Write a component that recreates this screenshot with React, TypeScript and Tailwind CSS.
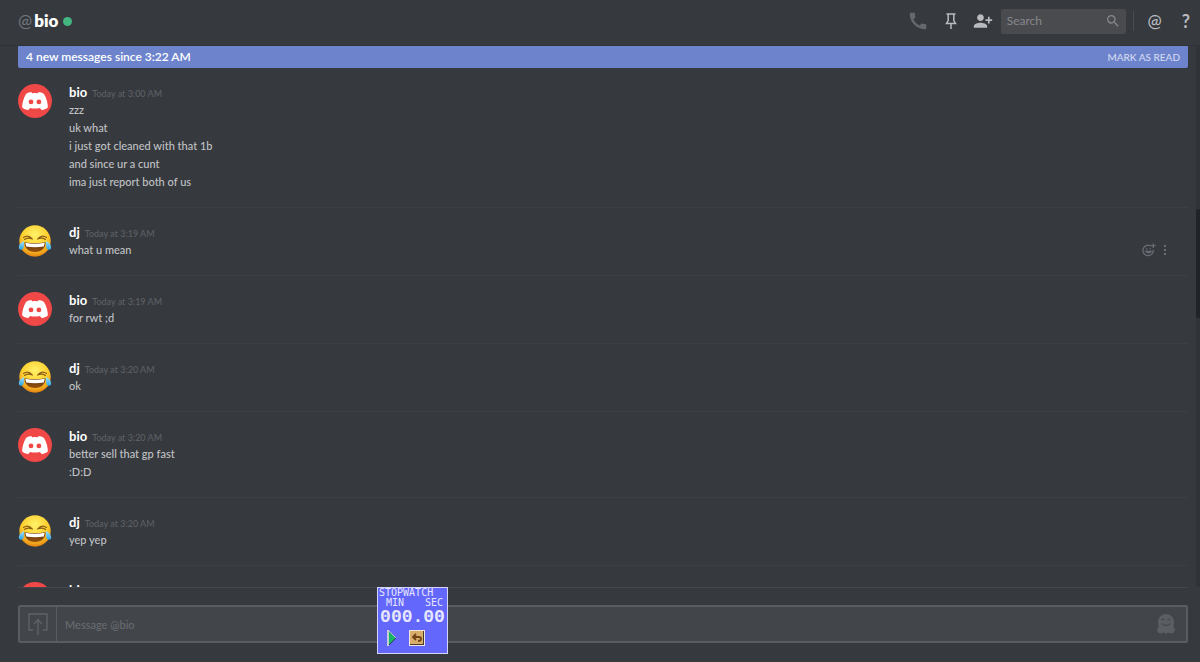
import { useId } from "react";
import { MdCall, MdPersonAdd, MdSearch } from "react-icons/md";

type Author = "bio" | "dj";

type MessageGroup = {
  author: Author;
  time: string;
  lines: string[];
  hovered?: boolean;
};

const MESSAGES: MessageGroup[] = [
  {
    author: "bio",
    time: "Today at 3:00 AM",
    lines: [
      "zzz",
      "uk what",
      "i just got cleaned with that 1b",
      "and since ur a cunt",
      "ima just report both of us",
    ],
  },
  { author: "dj", time: "Today at 3:19 AM", lines: ["what u mean"], hovered: true },
  { author: "bio", time: "Today at 3:19 AM", lines: ["for rwt ;d"] },
  { author: "dj", time: "Today at 3:20 AM", lines: ["ok"] },
  { author: "bio", time: "Today at 3:20 AM", lines: ["better sell that gp fast", ":D:D"] },
  { author: "dj", time: "Today at 3:20 AM", lines: ["yep yep"] },
  { author: "bio", time: "Today at 3:20 AM", lines: [] },
];

function DiscordAvatar() {
  return (
    <svg viewBox="0 0 34 34" className="size-full">
      <circle cx="17" cy="17" r="17" fill="#f04747" />
      <path
        d="M8 10C10 8.600 11.800 8.100 13.400 8l.7 1.200q2.900-.5 5.800 0l.7-1.200c1.600.1 3.400.6 5.400 2 2.300 3.900 3.700 8.200 3.900 13.300-1.700 1.700-3.900 2.600-6.400 2.700l-1.500-2q-5 1.200-10 0l-1.500 2c-2.500-.1-4.700-1-6.400-2.700.2-5.100 1.600-9.400 3.900-13.300z"
        fill="#fff"
      />
      <circle cx="13" cy="17.900" r="2.400" fill="#f04747" />
      <circle cx="20.900" cy="17.900" r="2.400" fill="#f04747" />
    </svg>
  );
}

function JoyAvatar() {
  const id = useId();
  return (
    <svg viewBox="0 0 34 34" className="size-full">
      <defs>
        <radialGradient id={`${id}face`} cx="0.5" cy="0.3" r="0.72">
          <stop offset="0" stopColor="#fff36b" />
          <stop offset="0.55" stopColor="#fdd02f" />
          <stop offset="0.85" stopColor="#f0a01c" />
          <stop offset="1" stopColor="#d9780c" />
        </radialGradient>
        <linearGradient id={`${id}mouth`} x1="0" y1="0" x2="0" y2="1">
          <stop offset="0" stopColor="#5a2f0a" />
          <stop offset="1" stopColor="#96520f" />
        </linearGradient>
        <linearGradient id={`${id}tear`} x1="0" y1="0" x2="0" y2="1">
          <stop offset="0" stopColor="#a5e2fa" />
          <stop offset="1" stopColor="#2fa3e0" />
        </linearGradient>
      </defs>
      <circle cx="17" cy="17" r="15.700" fill={`url(#${id}face)`} />
      <path
        d="M5.500 13.500q4.500-3.500 9 1.500q-4.500-2-8 .5M28.500 13.500q-4.500-3.500-9 1.500q4.500-2 8 .5"
        fill="none"
        stroke="#8a5a14"
        strokeWidth="1.100"
        strokeLinecap="round"
        strokeLinejoin="round"
      />
      <path d="M6.500 18.300q10.500 2 21 0c.2 5.700-4 9.700-10.500 9.700s-10.700-4-10.500-9.700z" fill={`url(#${id}mouth)`} />
      <path d="M7.200 18.800q9.800 1.900 19.600 0l-1 3.700q-8.800 1.500-17.600 0z" fill="#fff" />
      <path
        d="M6.200 17c-2.700.8-5.400 3.700-5.400 6.500 0 3.100 4.500 3 5-.6zM27.800 17c2.700.8 5.400 3.700 5.400 6.500 0 3.100-4.500 3-5-.6z"
        fill={`url(#${id}tear)`}
      />
    </svg>
  );
}

function PinIcon() {
  return (
    <svg viewBox="0 0 12 16" className="h-4 w-3" fill="none" stroke="#b9bbbe" strokeWidth="1.500">
      <path d="M1.500 1h9M3.200 1v6.500L1.500 10.500h9L8.800 7.500V1M6 10.500V16" />
    </svg>
  );
}

function ReactionIcon() {
  return (
    <svg viewBox="0 0 14 14" className="size-[14px]" fill="none" stroke="#6a6e74" strokeWidth="1.300">
      <path d="M8.500 2.800A5.200 5.200 0 1 0 11.300 7M11.300 .5v4.400M9 2.700h4.600M3.800 8.300q2.700 3 5.400 0z" />
      <path d="M4.700 5.200v1.400M8.300 5.200v1.400" />
    </svg>
  );
}

function UploadIcon() {
  return (
    <svg viewBox="0 0 20 22" className="h-[22px] w-5" fill="none" stroke="#5f6267" strokeWidth="1.400">
      <path d="M5 17H1V1h18v16h-4M10 22V7M6 11l4-4.500 4 4.500" />
    </svg>
  );
}

function GhostIcon() {
  return (
    <svg viewBox="0 0 18 20" className="h-5 w-[18px]">
      <path
        d="M9 0a8 8 0 0 1 8 8l-.5 4.500L18 16l-1.500 3-3 .5L11 18.500 9 20l-2-1.500-2.500 1-3-.5L0 16l1.500-3.500L1 8a8 8 0 0 1 8-8z"
        fill="#5b5e63"
      />
      <path d="M4.500 6q1.500-1.500 3 0M10.500 6q1.500-1.500 3 0M4.500 9.500q4.500 4 9 0" fill="none" stroke="#484b50" strokeWidth="1.200" />
    </svg>
  );
}

function Message({ author, time, lines, hovered }: MessageGroup) {
  return (
    <li className="flex gap-[17px] border-t border-[#3c3f44] pt-4 pb-4 first:border-t-0">
      <div className="size-[34px] shrink-0">
        {author === "bio" ? <DiscordAvatar /> : <JoyAvatar />}
      </div>
      <div className="min-w-0 flex-1">
        <div className="flex h-[17px] items-baseline gap-[5px] leading-[17px]">
          <span className="text-[13px] font-bold text-white">{author}</span>
          <time className="text-[9px] font-medium text-[#5d6065]">{time}</time>
        </div>
        {lines.map((line) => (
          <p key={line} className="text-[11px] leading-[18px] font-medium text-[#c0c2c5]">
            {line}
          </p>
        ))}
      </div>
      {hovered && (
        <div className="mr-[22px] flex h-[18px] items-center gap-2 self-end">
          <button aria-label="Add reaction">
            <ReactionIcon />
          </button>
          <button aria-label="More options" className="flex flex-col gap-[2px]">
            <span className="size-[2px] bg-[#6a6e74]" />
            <span className="size-[2px] bg-[#6a6e74]" />
            <span className="size-[2px] bg-[#6a6e74]" />
          </button>
        </div>
      )}
    </li>
  );
}

function Stopwatch() {
  return (
    <div className="absolute bottom-2 left-[377px] h-[67px] w-[71px] border border-[#d5d5fa] bg-[#6467fb] text-[#e6e6ff]">
      <div className="pl-px font-['DejaVu_Sans_Mono',monospace] text-[10px] leading-[10px]">STOPWATCH</div>
      <div className="flex justify-between pr-1 pl-2 font-['DejaVu_Sans_Mono',monospace] text-[10px] leading-[9px]">
        <span>MIN</span>
        <span>SEC</span>
      </div>
      <div className="text-center font-['Liberation_Mono',monospace] text-[18px] leading-[20px] font-bold">000.00</div>
      <div className="flex items-center gap-3 pt-[2px] pl-[9px]">
        <button aria-label="Start">
          <svg viewBox="0 0 10 18" className="h-[18px] w-[10px]">
            <path d="M1 1l8 8-8 8z" fill="#19b366" stroke="#b9bfd0" />
            <path d="M1 1v16" stroke="#dcdcdc" strokeWidth="1.500" />
            <path d="M9 9l-7 7" stroke="#2b3b52" />
          </svg>
        </button>
        <button aria-label="Reset" className="border border-[#f0e8e0] bg-[#d9ad6c]">
          <svg viewBox="0 0 14 14" className="size-[14px]" fill="none" stroke="#6f4414" strokeWidth="1.800">
            <path d="M0 13.500h14M13.500 0v14" stroke="#4a3a2a" strokeWidth="1" />
            <path d="M6 3L3 6l3 3M3 6h6q2 0 2 2t-3 2" />
          </svg>
        </button>
      </div>
    </div>
  );
}

export default function App() {
  return (
    <div className="relative flex h-screen flex-col overflow-hidden bg-[#36393e] font-[Lato,sans-serif]">
      <header className="flex h-[46px] shrink-0 items-center border-b border-[#2f3237] pr-[10px] pb-[3px] pl-[18px]">
        <span className="mr-[2px] text-[17px] text-[#72767d]">@</span>
        <h1 className="text-[17px] font-extrabold text-white">bio</h1>
        <span className="ml-[5px] size-[9px] rounded-full bg-[#43b581]" />
        <div className="ml-auto flex items-center text-[#b9bbbe]">
          <button aria-label="Call" className="mr-4 text-[#65686d]">
            <MdCall className="size-[22px]" />
          </button>
          <button aria-label="Pinned messages" className="mr-4">
            <PinIcon />
          </button>
          <button aria-label="Add friends" className="mr-2">
            <MdPersonAdd className="size-5 -scale-x-100" />
          </button>
          <label className="flex h-[25px] w-[125px] items-center rounded-xs bg-[#4a4b4f] pr-[5px] pl-[6px]">
            <input
              type="text"
              aria-label="Search"
              placeholder="Search"
              className="min-w-0 flex-1 text-[12px] outline-none placeholder:text-[#85878b]"
            />
            <MdSearch className="size-4 text-[#85878b]" />
          </label>
          <span className="mx-[7px] h-5 w-px bg-[#4a4d52]" />
          <button aria-label="Mentions" className="w-7 text-[17px] font-medium">
            @
          </button>
          <button aria-label="Help" className="ml-[13px] text-[18px] font-bold">
            ?
          </button>
        </div>
      </header>

      <main className="flex min-h-0 flex-1">
        <div className="ml-[18px] min-w-0 flex-1 overflow-hidden">
          <div className="flex h-[22px] items-center justify-between rounded-b-xs bg-[#6d84cd] px-2">
            <span className="text-[12px] font-semibold text-white">4 new messages since 3:22 AM</span>
            <button className="text-[10px] font-medium text-[#d3daf0]">MARK AS READ</button>
          </div>
          <ul>
            {MESSAGES.map((group, i) => (
              <Message key={i} {...group} />
            ))}
          </ul>
        </div>
        <div className="ml-2 w-1 rounded-l-xs bg-[#303338] pt-[163px]">
          <div className="h-[109px] rounded-l-xs bg-[#212327]" />
        </div>
      </main>

      <form className="mr-3 ml-[18px] border-t border-[#43464b] pt-[17px] pb-[19px]">
        <div className="flex h-[38px] items-center rounded-xs border-2 border-[#595c61] bg-[#424549]">
          <button
            type="button"
            aria-label="Upload a file"
            className="flex h-full w-[37px] items-center justify-center border-r border-[#595c61]"
          >
            <UploadIcon />
          </button>
          <input
            type="text"
            aria-label="Message @bio"
            placeholder="Message @bio"
            className="h-full min-w-0 flex-1 px-2 text-[11px] font-medium outline-none placeholder:text-[#686b70]"
          />
          <button type="button" aria-label="Emoji" className="mr-[11px]">
            <GhostIcon />
          </button>
        </div>
      </form>

      <Stopwatch />
    </div>
  );
}
